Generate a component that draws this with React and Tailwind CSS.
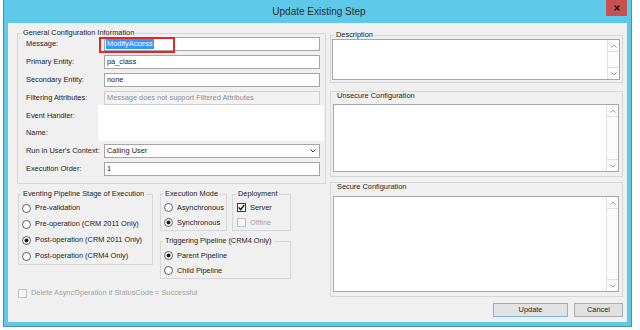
import React from "react";

function Chev({ up, color = "#9a9a9a" }) {
  return (
    <svg width="6" height="4" viewBox="0 0 6 4">
      <polyline
        points={up ? "0.5,3.5 3,1 5.5,3.5" : "0.5,0.5 3,3 5.5,0.5"}
        fill="none"
        stroke={color}
        strokeWidth="1"
      />
    </svg>
  );
}

function TextArea({ className }) {
  return (
    <div className={"flex border border-[#a7a7a7] bg-white " + className}>
      <div className="flex-1" />
      <div className="flex w-[12px] flex-col border-l border-[#e2e2e2] bg-[#fbfbfb]">
        <div className="flex h-[12px] items-center justify-center border-b border-[#e2e2e2]">
          <Chev up />
        </div>
        <div className="flex-1" />
        <div className="flex h-[12px] items-center justify-center border-t border-[#e2e2e2]">
          <Chev />
        </div>
      </div>
    </div>
  );
}

function Radio({ checked, children, h }) {
  return (
    <div className={"flex items-center gap-[4px] " + h}>
      <svg width="9" height="9" viewBox="0 0 9 9" className="shrink-0">
        <circle cx="4.5" cy="4.5" r="4" fill="white" stroke="#4d4d4d" strokeWidth="0.9" />
        {checked && <circle cx="4.5" cy="4.5" r="2" fill="#1a1a1a" />}
      </svg>
      <span>{children}</span>
    </div>
  );
}

function Check({ checked, disabled }) {
  return (
    <span
      className={
        "flex h-[9px] w-[9px] shrink-0 items-center justify-center border " +
        (disabled ? "border-[#c4c4c4] bg-[#f6f6f6]" : "border-[#3a3a3a] bg-white")
      }
    >
      {checked && (
        <svg width="7" height="7" viewBox="0 0 7 7">
          <polyline points="0.8,3.6 2.7,5.6 6.2,1" fill="none" stroke="#111" strokeWidth="1.4" />
        </svg>
      )}
    </span>
  );
}

function Field({ label, mt, children }) {
  return (
    <div className={"flex h-[14px] items-center " + mt}>
      <span className="w-[78px] shrink-0">{label}</span>
      {children}
    </div>
  );
}

export default function App() {
  return (
    <div className="flex h-[330px] w-[640px] overflow-hidden bg-white font-['Liberation_Sans',Arial,sans-serif] text-[7.4px] leading-[8px] text-[#222]">
      <div className="ml-[3px] flex h-[327px] w-[629px] flex-col border-x border-b border-[#4a8fb0] bg-[#5fc9ea]">
        {/* Title bar */}
        <div className="relative flex h-[23px] shrink-0 items-center justify-center">
          <span className="ml-[3px] text-[10px] leading-[12px] text-[#2b2b2b]">Update Existing Step</span>
          <div className="absolute right-[4px] top-0 flex h-[16px] w-[21px] items-center justify-center bg-[#c75050]">
            <svg width="6" height="6" viewBox="0 0 6 6">
              <path d="M0.5 0.5 L5.5 5.5 M5.5 0.5 L0.5 5.5" stroke="#1a1a1a" strokeWidth="1.5" />
            </svg>
          </div>
        </div>

        {/* Content */}
        <div className="mx-[4px] mb-[4px] flex flex-1 gap-[4px] bg-[#f0f0f0] pl-[9px] pr-[4px]">
          {/* Left column */}
          <div className="flex w-[309px] flex-col">
            <fieldset className="mt-[6px] border border-[#d7d7d7] pb-[7px]">
              <legend className="ml-[3px] px-[2px] leading-[8px]">General Configuration Information</legend>
              <div className="flex flex-col pl-[8px] pr-[5px]">
                <Field label="Message:" mt="">
                  <div className="relative flex h-full flex-1 items-center border border-[#a5a5a5] bg-white pl-[1px]">
                    <span className="bg-[#3399ff] px-[1px] leading-[10px] text-white">ModifyAccess</span>
                    <div className="absolute left-[-6px] top-[-1px] h-[16px] w-[76px] border-2 border-[#e3262b]" />
                  </div>
                </Field>
                <Field label="Primary Entity:" mt="mt-[4px]">
                  <div className="flex h-full flex-1 items-center border border-[#a5a5a5] bg-white pl-[2px]">pa_class</div>
                </Field>
                <Field label="Secondary Entity:" mt="mt-[4px]">
                  <div className="flex h-full flex-1 items-center border border-[#a5a5a5] bg-white pl-[2px]">none</div>
                </Field>
                <Field label="Filtering Attributes:" mt="mt-[4px]">
                  <div className="flex h-full flex-1 items-center border border-[#cfcfcf] bg-[#f3f3f3] pl-[2px] text-[#8e8e8e]">
                    Message does not support Filtered Attributes
                  </div>
                </Field>
                <div className="flex h-[36px]">
                  <div className="flex w-[72px] shrink-0 flex-col pt-[7px]">
                    <span>Event Handler:</span>
                    <span className="mt-[9px]">Name:</span>
                  </div>
                  <div className="mr-[-4px] flex-1 bg-white" />
                </div>
                <Field label="Run in User's Context:" mt="mt-[3px]">
                  <div className="flex h-full flex-1 items-center justify-between border border-[#a5a5a5] bg-white pl-[2px] pr-[3px]">
                    <span>Calling User</span>
                    <Chev color="#333" />
                  </div>
                </Field>
                <Field label="Execution Order:" mt="mt-[4px]">
                  <div className="flex h-full flex-1 items-center border border-[#a5a5a5] bg-white pl-[2px]">1</div>
                </Field>
              </div>
            </fieldset>

            <div className="mt-[6px] flex items-start">
              <fieldset className="ml-[1px] w-[135px] border border-[#d7d7d7]">
                <legend className="ml-[2px] px-[2px] leading-[8px]">Eventing Pipeline Stage of Execution</legend>
                <div className="flex flex-col pl-[3px] pt-[2px]">
                  <Radio h="h-[16px]">Pre-validation</Radio>
                  <Radio h="h-[16px]">Pre-operation (CRM 2011 Only)</Radio>
                  <Radio h="h-[16px]" checked>Post-operation (CRM 2011 Only)</Radio>
                  <Radio h="h-[16px]">Post-operation (CRM4 Only)</Radio>
                </div>
              </fieldset>

              <div className="ml-[7px] flex w-[131px] flex-col">
                <div className="flex items-start gap-[5px]">
                  <fieldset className="w-[67px] border border-[#d7d7d7]">
                    <legend className="ml-[2px] px-[2px] leading-[8px]">Execution Mode</legend>
                    <div className="flex flex-col pl-[3px] pt-[2px]">
                      <Radio h="h-[15px]">Asynchronous</Radio>
                      <Radio h="h-[15px]" checked>Synchronous</Radio>
                    </div>
                  </fieldset>
                  <fieldset className="w-[59px] border border-[#d7d7d7]">
                    <legend className="ml-[3px] px-[2px] leading-[8px]">Deployment</legend>
                    <div className="flex flex-col pl-[4px] pt-[2px]">
                      <div className="flex h-[15px] items-center gap-[4px]">
                        <Check checked />
                        <span>Server</span>
                      </div>
                      <div className="flex h-[15px] items-center gap-[4px] text-[#a3a3a3]">
                        <Check disabled />
                        <span>Offline</span>
                      </div>
                    </div>
                  </fieldset>
                </div>
                <fieldset className="mt-[6px] w-[131px] border border-[#d7d7d7]">
                  <legend className="ml-[2px] px-[2px] leading-[8px]">Triggering Pipeline (CRM4 Only)</legend>
                  <div className="flex flex-col pl-[3px] pt-[3px]">
                    <Radio h="h-[15px]" checked>Parent Pipeline</Radio>
                    <Radio h="h-[15px]">Child Pipeline</Radio>
                  </div>
                </fieldset>
              </div>
            </div>

            <div className="ml-[1px] mt-[8px] flex h-[12px] items-center gap-[4px] text-[#a3a3a3]">
              <Check disabled />
              <span>Delete AsyncOperation if StatusCode = Successful</span>
            </div>
          </div>

          {/* Right column */}
          <div className="flex w-[293px] flex-col">
            <fieldset className="mt-[8px] border border-[#d7d7d7] pb-[2px]">
              <legend className="ml-[3px] px-[2px] leading-[8px]">Description</legend>
              <div className="pl-[1px] pr-[2px]">
                <TextArea className="h-[41px]" />
              </div>
            </fieldset>

            <div className="mt-[8px] flex flex-col border border-[#d7d7d7] pb-[4px] pl-[2px] pr-[3px]">
              <span className="pl-[4px]">Unsecure Configuration</span>
              <TextArea className="mt-[4px] h-[68px]" />
            </div>

            <div className="mt-[5px] flex flex-col border border-[#d7d7d7] pb-[4px] pl-[2px] pr-[3px]">
              <span className="pl-[4px]">Secure Configuration</span>
              <TextArea className="mt-[5px] h-[96px]" />
            </div>

            <div className="mt-[6px] flex justify-end gap-[6px]">
              <div className="flex h-[14px] w-[75px] items-center justify-center border border-[#7eb4ea] bg-[#e3e3e3]">
                Update
              </div>
              <div className="flex h-[14px] w-[49px] items-center justify-center border border-[#adadad] bg-[#e1e1e1]">
                Cancel
              </div>
            </div>
          </div>
        </div>
      </div>
    </div>
  );
}
